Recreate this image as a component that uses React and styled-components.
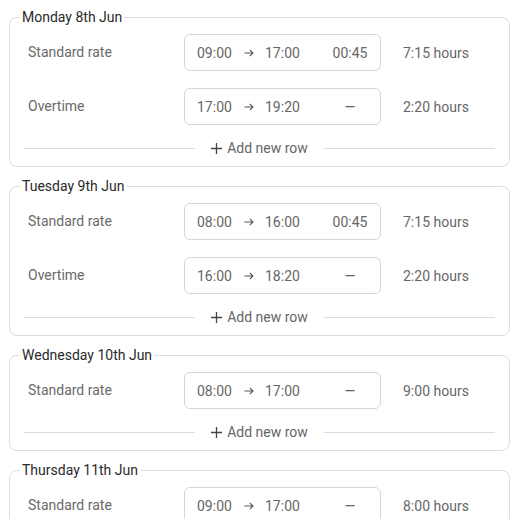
import React from "react";
import styled, { createGlobalStyle } from "styled-components";

const Global = createGlobalStyle`
  html, body { margin: 0; padding: 0; background: #fff; }
  body { font-family: Roboto, "Noto Sans", sans-serif; }
`;

const Page = styled.div`
  padding: 8px 9px 8px 9px;
  display: flex;
  flex-direction: column;
  gap: 10px;
`;

const Day = styled.fieldset`
  margin: 0;
  padding: 8px 14px 9px 14px;
  border: 1px solid #dcdcdc;
  border-radius: 8px;
  min-width: 0;
`;

const Legend = styled.legend`
  margin-left: -4px;
  padding: 0 2px;
  font-size: 14px;
  line-height: 18px;
  color: #2a2a2a;
`;

const Rows = styled.div`
  display: flex;
  flex-direction: column;
  gap: 17px;
`;

const Row = styled.div`
  display: flex;
  align-items: center;
  padding-left: 4px;
`;

const Label = styled.div`
  width: 156px;
  font-size: 14px;
  color: #6a6a6a;
  margin-top: -2px;
`;

const TimeBox = styled.div`
  box-sizing: border-box;
  width: 197px;
  height: 37px;
  border: 1px solid #d6d6d6;
  border-radius: 6px;
  display: flex;
  align-items: center;
  padding: 0 12px 0 12px;
  font-size: 14px;
  color: #666;
`;

const Time = styled.span`
  width: 35px;
`;

const Arrow = styled.svg`
  margin: 1px 11px 0 12px;
  flex: none;
`;

const Break = styled.span`
  margin-left: auto;
  width: 36px;
  text-align: center;
`;

const Hours = styled.div`
  margin-left: 22px;
  font-size: 14px;
  color: #666;
`;

const AddRow = styled.div`
  margin-top: 14px;
  height: 18px;
  display: flex;
  align-items: center;
  gap: 16px;
`;

const Line = styled.div`
  flex: 1;
  height: 1px;
  background: #dcdcdc;
`;

const AddButton = styled.button`
  display: flex;
  align-items: center;
  gap: 5px;
  border: 0;
  background: none;
  padding: 0;
  font-family: inherit;
  font-size: 14px;
  color: #666;
  cursor: pointer;
`;

const days = [
  {
    title: "Monday 8th Jun",
    rows: [
      { label: "Standard rate", from: "09:00", to: "17:00", brk: "00:45", hours: "7:15 hours" },
      { label: "Overtime", from: "17:00", to: "19:20", brk: "—", hours: "2:20 hours" },
    ],
  },
  {
    title: "Tuesday 9th Jun",
    rows: [
      { label: "Standard rate", from: "08:00", to: "16:00", brk: "00:45", hours: "7:15 hours" },
      { label: "Overtime", from: "16:00", to: "18:20", brk: "—", hours: "2:20 hours" },
    ],
  },
  {
    title: "Wednesday 10th Jun",
    rows: [
      { label: "Standard rate", from: "08:00", to: "17:00", brk: "—", hours: "9:00 hours" },
    ],
  },
  {
    title: "Thursday 11th Jun",
    rows: [
      { label: "Standard rate", from: "09:00", to: "17:00", brk: "—", hours: "8:00 hours" },
    ],
  },
];

const ArrowIcon = () => (
  <Arrow width="10" height="10" viewBox="0 0 10 10" fill="none" stroke="#555" strokeWidth="1.1">
    <path d="M0.5 5H9M5.8 1.8L9 5L5.8 8.2" />
  </Arrow>
);

const PlusIcon = () => (
  <svg width="11" height="11" viewBox="0 0 11 11" fill="none" stroke="#444" strokeWidth="1.3">
    <path d="M5.5 0V11M0 5.5H11" />
  </svg>
);

export default function App() {
  return (
    <>
      <Global />
      <Page>
        {days.map((d) => (
          <Day key={d.title}>
            <Legend>{d.title}</Legend>
            <Rows>
              {d.rows.map((r, i) => (
                <Row key={i}>
                  <Label>{r.label}</Label>
                  <TimeBox>
                    <Time>{r.from}</Time>
                    <ArrowIcon />
                    <Time>{r.to}</Time>
                    <Break>{r.brk}</Break>
                  </TimeBox>
                  <Hours>{r.hours}</Hours>
                </Row>
              ))}
            </Rows>
            <AddRow>
              <Line />
              <AddButton>
                <PlusIcon />
                Add new row
              </AddButton>
              <Line />
            </AddRow>
          </Day>
        ))}
      </Page>
    </>
  );
}
